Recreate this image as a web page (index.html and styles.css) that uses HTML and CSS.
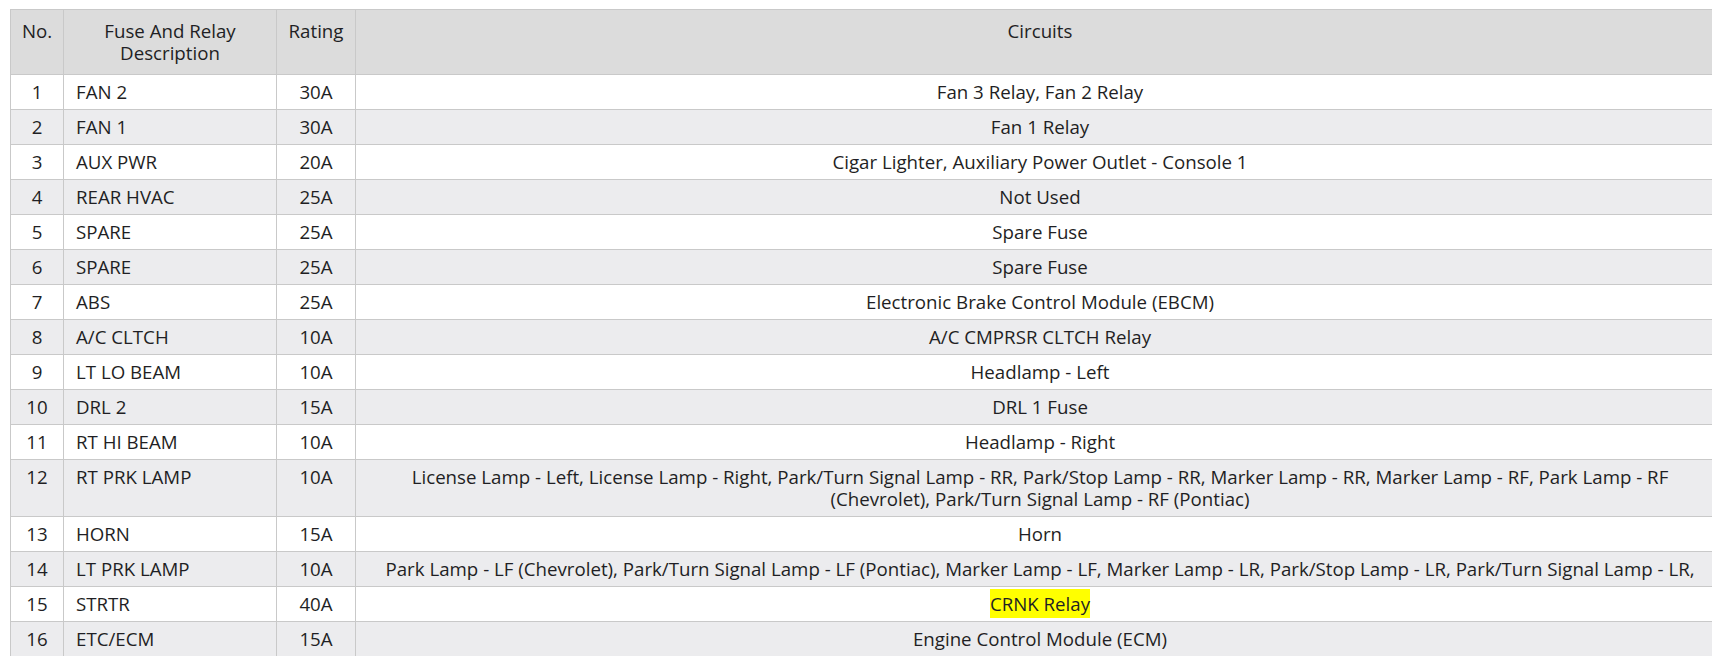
FILE: index.html
```html
<!DOCTYPE html>
<html lang="en">
<head>
<meta charset="utf-8">
<title>Fuse And Relay Table</title>
<link rel="stylesheet" href="styles.css">
</head>
<body>
<div class="page">
<table class="fuse-table">
  <colgroup>
    <col class="c-no">
    <col class="c-desc">
    <col class="c-rating">
    <col class="c-circ">
  </colgroup>
  <thead>
    <tr>
      <th>No.</th>
      <th>Fuse And Relay Description</th>
      <th>Rating</th>
      <th>Circuits</th>
    </tr>
  </thead>
  <tbody>
    <tr><td class="no">1</td><td class="desc">FAN 2</td><td class="rating">30A</td><td class="circ">Fan 3 Relay, Fan 2 Relay</td></tr>
    <tr><td class="no">2</td><td class="desc">FAN 1</td><td class="rating">30A</td><td class="circ">Fan 1 Relay</td></tr>
    <tr><td class="no">3</td><td class="desc">AUX PWR</td><td class="rating">20A</td><td class="circ">Cigar Lighter, Auxiliary Power Outlet - Console 1</td></tr>
    <tr><td class="no">4</td><td class="desc">REAR HVAC</td><td class="rating">25A</td><td class="circ">Not Used</td></tr>
    <tr><td class="no">5</td><td class="desc">SPARE</td><td class="rating">25A</td><td class="circ">Spare Fuse</td></tr>
    <tr><td class="no">6</td><td class="desc">SPARE</td><td class="rating">25A</td><td class="circ">Spare Fuse</td></tr>
    <tr><td class="no">7</td><td class="desc">ABS</td><td class="rating">25A</td><td class="circ">Electronic Brake Control Module (EBCM)</td></tr>
    <tr><td class="no">8</td><td class="desc">A/C CLTCH</td><td class="rating">10A</td><td class="circ">A/C CMPRSR CLTCH Relay</td></tr>
    <tr><td class="no">9</td><td class="desc">LT LO BEAM</td><td class="rating">10A</td><td class="circ">Headlamp - Left</td></tr>
    <tr><td class="no">10</td><td class="desc">DRL 2</td><td class="rating">15A</td><td class="circ">DRL 1 Fuse</td></tr>
    <tr><td class="no">11</td><td class="desc">RT HI BEAM</td><td class="rating">10A</td><td class="circ">Headlamp - Right</td></tr>
    <tr><td class="no">12</td><td class="desc">RT PRK LAMP</td><td class="rating">10A</td><td class="circ">License Lamp - Left, License Lamp - Right, Park/Turn Signal Lamp - RR, Park/Stop Lamp - RR, Marker Lamp - RR, Marker Lamp - RF, Park Lamp - RF (Chevrolet), Park/Turn Signal Lamp - RF (Pontiac)</td></tr>
    <tr><td class="no">13</td><td class="desc">HORN</td><td class="rating">15A</td><td class="circ">Horn</td></tr>
    <tr><td class="no">14</td><td class="desc">LT PRK LAMP</td><td class="rating">10A</td><td class="circ">Park Lamp - LF (Chevrolet), Park/Turn Signal Lamp - LF (Pontiac), Marker Lamp - LF, Marker Lamp - LR, Park/Stop Lamp - LR, Park/Turn Signal Lamp - LR,</td></tr>
    <tr><td class="no">15</td><td class="desc">STRTR</td><td class="rating">40A</td><td class="circ"><span class="hl">CRNK Relay</span></td></tr>
    <tr><td class="no">16</td><td class="desc">ETC/ECM</td><td class="rating">15A</td><td class="circ">Engine Control Module (ECM)</td></tr>
  </tbody>
</table>
</div>
</body>
</html>
```

FILE: styles.css
```css
html, body {
  margin: 0;
  padding: 0;
  overflow: hidden;
  background: #ffffff;
}

.page {
  padding: 9px 0 0 10px;
  width: 1740px;
}

.fuse-table {
  border-collapse: collapse;
  table-layout: fixed;
  width: 1714px;
  font-family: "Open Sans", "Noto Sans", "Liberation Sans", sans-serif;
  font-size: 18.7px;
  line-height: 22px;
  color: #1f1f24;
}

.c-no { width: 53px; }
.c-desc { width: 213px; }
.c-rating { width: 79px; }
.c-circ { width: 1369px; }

.fuse-table th,
.fuse-table td {
  border: 1px solid #c9c9c9;
  vertical-align: top;
}

.fuse-table th {
  background: #dcdcdc;
  font-weight: 400;
  text-align: center;
  padding: 10px 8px;
}

.fuse-table td {
  padding: 6px 8px;
}

.fuse-table tbody tr:nth-child(odd) td {
  background: #ffffff;
}

.fuse-table tbody tr:nth-child(even) td {
  background: #ececee;
}

.no,
.rating,
.circ {
  text-align: center;
}

.desc {
  text-align: left;
}

.fuse-table td.desc {
  padding-left: 12px;
}

.hl {
  background: #ffff00;
  padding: 2px 0;
}
```
